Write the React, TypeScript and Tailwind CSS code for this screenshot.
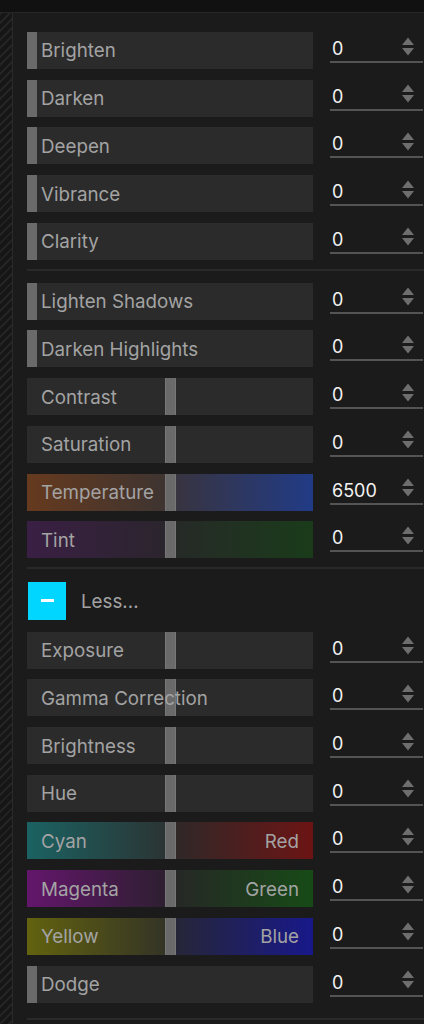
import React from "react";

type Row = {
  label: string;
  value?: string;
  center?: boolean;
  left?: string;
  right?: string;
  rightLabel?: string;
};

const groupA: Row[] = [
  { label: "Brighten" },
  { label: "Darken" },
  { label: "Deepen" },
  { label: "Vibrance" },
  { label: "Clarity" },
];

const groupB: Row[] = [
  { label: "Lighten Shadows" },
  { label: "Darken Highlights" },
  { label: "Contrast", center: true },
  { label: "Saturation", center: true },
  {
    label: "Temperature",
    value: "6500",
    center: true,
    left: "bg-[linear-gradient(to_right,#663a1e,#3e3431)]",
    right: "bg-[linear-gradient(to_right,#383440,#213b86)]",
  },
  {
    label: "Tint",
    center: true,
    left: "bg-[linear-gradient(to_right,#3a1f44,#2b252d)]",
    right: "bg-[linear-gradient(to_right,#262a27,#1a3b1a)]",
  },
];

const groupC: Row[] = [
  { label: "Exposure", center: true },
  { label: "Gamma Correction", center: true },
  { label: "Brightness", center: true },
  { label: "Hue", center: true },
  {
    label: "Cyan",
    center: true,
    rightLabel: "Red",
    left: "bg-[linear-gradient(to_right,#1b6262,#2b3434)]",
    right: "bg-[linear-gradient(to_right,#302828,#6c1414)]",
  },
  {
    label: "Magenta",
    center: true,
    rightLabel: "Green",
    left: "bg-[linear-gradient(to_right,#63166b,#2e1f31)]",
    right: "bg-[linear-gradient(to_right,#262826,#174a17)]",
  },
  {
    label: "Yellow",
    center: true,
    rightLabel: "Blue",
    left: "bg-[linear-gradient(to_right,#62620f,#343426)]",
    right: "bg-[linear-gradient(to_right,#262638,#18188a)]",
  },
  { label: "Dodge" },
];

function Spinner() {
  return (
    <svg width="12" height="20" viewBox="0 0 12 20" className="shrink-0">
      <polygon points="0,8 6,0.5 12,8" fill="#6e6e6e" />
      <polygon points="0,11 12,11 6,18.5" fill="#6e6e6e" />
    </svg>
  );
}

function Slider({ row }: { row: Row }) {
  if (row.center) {
    return (
      <div className="w-[286px] h-[37px] flex bg-[#2b2b2b]">
        <div className={`w-[138px] h-full flex items-center pl-[14px] ${row.left ?? ""}`}>
          <span className="relative z-10 pt-[2px] text-[18.75px] text-[#a3a3a3] whitespace-nowrap">{row.label}</span>
        </div>
        <div className="w-[11px] h-full bg-[#6a6a6a] border-x border-[#777]" />
        <div className={`flex-1 h-full flex items-center justify-end pr-[14px] ${row.right ?? ""}`}>
          {row.rightLabel && (
            <span className="pt-[2px] text-[18.75px] text-[#a3a3a3]">{row.rightLabel}</span>
          )}
        </div>
      </div>
    );
  }
  return (
    <div className="w-[286px] h-[37px] flex items-center bg-[#2b2b2b]">
      <div className="w-[10px] h-full bg-[#6a6a6a]" />
      <span className="pl-[4px] pt-[2px] text-[18.75px] text-[#a3a3a3] whitespace-nowrap">{row.label}</span>
    </div>
  );
}

function SliderRow({ row }: { row: Row }) {
  return (
    <div className="flex items-start">
      <Slider row={row} />
      <div className="ml-[17px] w-[93px] h-[31px] flex items-center justify-between border-b-2 border-[#545454] pl-[2px] pr-[9px]">
        <span className="mt-[4px] text-[18px] text-[#f2f2f2]">{row.value ?? "0"}</span>
        <Spinner />
      </div>
    </div>
  );
}

function Group({ rows }: { rows: Row[] }) {
  return (
    <div className="flex flex-col gap-[10.7px]">
      {rows.map((r) => (
        <SliderRow key={r.label} row={r} />
      ))}
    </div>
  );
}

function Divider() {
  return <div className="h-[2px] bg-[#292929]" />;
}

export default function App() {
  return (
    <div
      className="w-[424px] h-[1024px] overflow-hidden bg-[#1b1b1b] flex flex-col"
      style={{ fontFamily: "Inter, 'Noto Sans', sans-serif" }}
    >
      <div className="h-[13px] shrink-0 bg-[#111111] border-b border-[#262626]" />
      <div className="flex flex-1">
        <div className="w-[13px] shrink-0 border-r border-[#2a2a2a] bg-[repeating-linear-gradient(135deg,#242424_0px,#242424_2px,#161616_2px,#161616_6px)]" />
        <div className="flex-1 pl-[14px] pt-[19px] flex flex-col">
          <Group rows={groupA} />
          <div className="mt-[9.5px] mb-[11.5px]">
            <Divider />
          </div>
          <Group rows={groupB} />
          <div className="mt-[9px] mb-[12.5px]">
            <Divider />
          </div>
          <div className="flex items-center h-[38px]">
            <div className="w-[38px] h-[38px] ml-[1px] bg-[#00d6ff] flex items-center justify-center">
              <div className="w-[13px] h-[3px] bg-white" />
            </div>
            <span className="ml-[15px] pt-[2px] text-[18.75px] text-[#a3a3a3]">Less...</span>
          </div>
          <div className="mt-[12px]">
            <Group rows={groupC} />
          </div>
          <div className="mt-[15px]">
            <Divider />
          </div>
        </div>
      </div>
    </div>
  );
}
